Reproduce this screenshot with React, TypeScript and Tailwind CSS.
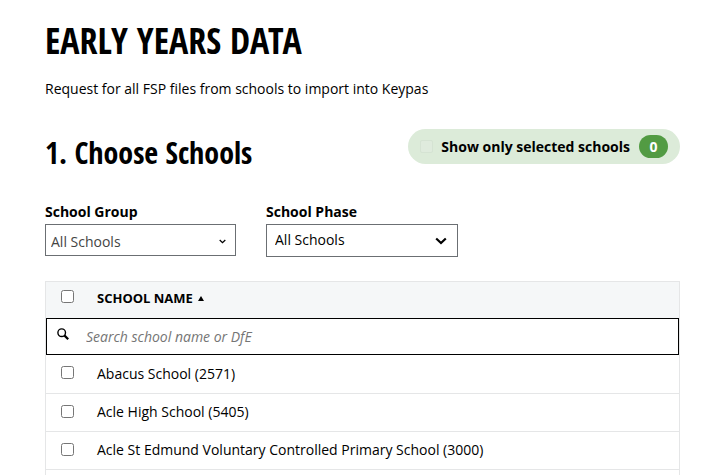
import { useState } from "react";

const SCHOOLS = [
  { id: "2571", name: "Abacus School" },
  { id: "5405", name: "Acle High School" },
  { id: "3000", name: "Acle St Edmund Voluntary Controlled Primary School" },
];

const checkbox = "block w-[13px] h-[13px] cursor-pointer";
const heading = "font-['Open_Sans_Condensed','Liberation_Sans_Narrow','Open_Sans',sans-serif] font-bold";

function Chevron({ className }: { className: string }) {
  return (
    <svg viewBox="0 0 12 8" className={className} fill="none" stroke="#000" strokeWidth="2.2">
      <path d="M1.2 1.5 6 6l4.8-4.5" />
    </svg>
  );
}

export default function App() {
  const [selected, setSelected] = useState<string[]>([]);
  const [onlySelected, setOnlySelected] = useState(false);
  const [search, setSearch] = useState("");

  const toggle = (id: string) =>
    setSelected((s) => (s.includes(id) ? s.filter((x) => x !== id) : [...s, id]));

  const rows = SCHOOLS.filter(
    (s) =>
      (!onlySelected || selected.includes(s.id)) &&
      `${s.name} (${s.id})`.toLowerCase().includes(search.toLowerCase())
  );

  return (
    <main className="flex flex-col min-h-screen bg-white text-black pl-[45px] pr-[21px] pt-4 font-['Open_Sans','Noto_Sans',sans-serif] text-sm leading-5">
      <h1 className={`${heading} text-[36px] leading-[50px]`}>EARLY YEARS DATA</h1>
      <p className="mt-[13px]">Request for all FSP files from schools to import into Keypas</p>

      <div className="flex items-start justify-between mt-[30px]">
        <h2 className={`${heading} text-[30px] leading-[48px]`}>1. Choose Schools</h2>
        <label className="flex items-center h-[35px] px-3 rounded-full bg-[#dcebd9] font-bold cursor-pointer">
          <input
            type="checkbox"
            checked={onlySelected}
            disabled={selected.length === 0}
            onChange={(e) => setOnlySelected(e.target.checked)}
            className="appearance-none w-[13px] h-[13px] mr-2 rounded-xs border border-[#d5e3d3] bg-[#dfebdd]"
          />
          Show only selected schools
          <span className="flex items-center justify-center w-[29px] h-[23px] ml-[9px] rounded-full bg-[#529b43] text-white">
            {selected.length}
          </span>
        </label>
      </div>

      <div className="flex gap-[30px] mt-6">
        <div>
          <label htmlFor="group" className="block mb-px font-bold leading-[22px]">School Group</label>
          <div className="relative w-[191px]">
            <select id="group" className="appearance-none block w-full h-8 pl-[5px] pt-1 border border-[#6b6f73] bg-white text-[#444]">
              <option>All Schools</option>
            </select>
            <Chevron className="absolute right-[10px] top-[15px] w-[7px] h-[5px] pointer-events-none" />
          </div>
        </div>
        <div>
          <label htmlFor="phase" className="block mb-px font-bold leading-[22px]">School Phase</label>
          <div className="relative w-48">
            <select id="phase" className="appearance-none block w-full h-[33px] pl-2 pb-[2px] border border-[#6b6f73] bg-white">
              <option>All Schools</option>
            </select>
            <Chevron className="absolute right-[11px] top-[13px] w-3 h-2 pointer-events-none" />
          </div>
        </div>
      </div>

      <div className="flex-1 mt-6 border border-b-0 border-[#e5e6e7]">
        <table className="w-full border-collapse text-left">
          <thead>
            <tr className="h-9 bg-[#f5f7f8]">
              <th className="w-9 pl-[15px] pb-[7px]">
                <input
                  type="checkbox"
                  aria-label="Select all schools"
                  className={checkbox}
                  checked={selected.length === SCHOOLS.length}
                  onChange={(e) => setSelected(e.target.checked ? SCHOOLS.map((s) => s.id) : [])}
                />
              </th>
              <th className="pl-[15px] pb-1 text-[13px] font-bold">
                <span className="flex items-center gap-[5px]">
                  SCHOOL NAME
                  <svg viewBox="0 0 6 5" className="w-[6px] h-[5px]">
                    <path d="M3 0 6 5H0z" />
                  </svg>
                </span>
              </th>
            </tr>
            <tr>
              <td colSpan={2}>
                <label className="flex items-center h-[37px] pl-[10px] border border-black">
                  <svg viewBox="0 0 12 12" className="w-3 h-3 mb-[6px]" fill="none" stroke="#000">
                    <circle cx="4.7" cy="4.7" r="3.8" strokeWidth="1.4" />
                    <path d="m7.6 7.6 3.6 3.6" strokeWidth="2.2" />
                  </svg>
                  <input
                    type="text"
                    aria-label="Search schools"
                    placeholder="Search school name or DfE"
                    value={search}
                    onChange={(e) => setSearch(e.target.value)}
                    className="flex-1 ml-[17px] outline-none placeholder:italic placeholder:text-[#757575]"
                  />
                </label>
              </td>
            </tr>
          </thead>
          <tbody>
            {rows.map((s) => (
              <tr key={s.id} className="h-[38px] border-b border-[#e5e6e7]">
                <td className="pl-[15px] pb-[2px]">
                  <input
                    id={s.id}
                    type="checkbox"
                    className={checkbox}
                    checked={selected.includes(s.id)}
                    onChange={() => toggle(s.id)}
                  />
                </td>
                <td className="pl-[15px]">
                  <label htmlFor={s.id}>{s.name} ({s.id})</label>
                </td>
              </tr>
            ))}
          </tbody>
        </table>
      </div>
    </main>
  );
}
